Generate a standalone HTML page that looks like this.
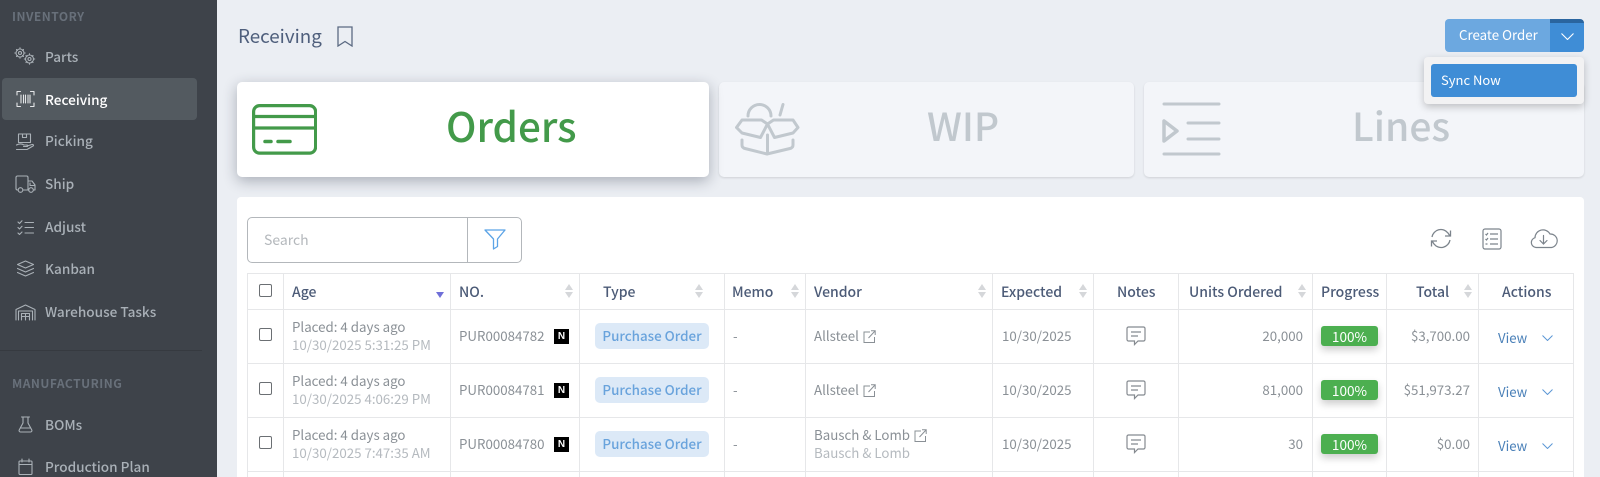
<!DOCTYPE html>
<html><head><meta charset="utf-8"><style>
html,body{margin:0;padding:0}
body{width:1600px;height:477px;overflow:hidden;background:#ebeef3;position:relative;font-family:"Noto Sans CJK JP","Liberation Sans",sans-serif;font-size:14px;color:#8a9096}
.a,.t,svg{position:absolute}
.t{white-space:nowrap;line-height:20px}
.side{left:0;top:0;width:217px;height:477px;background:#3e434a}
.n{left:45px;color:#a9b0b7;font-size:13.6px;font-weight:500;transform:translateY(-1px)}
.sec{left:12px;color:#68707a;font-size:12px;font-weight:700;letter-spacing:.5px}
.i{fill:none;stroke:#aab1b7;stroke-width:1.1;stroke-linecap:round;stroke-linejoin:round}
.card{top:82px;height:95px;border-radius:5px;background:#f3f5f9;box-shadow:0 1px 2px rgba(0,0,0,.12)}
.big{font-size:39px;line-height:50px;top:100px;font-weight:500;color:#c1c8ce}
.g{fill:none;stroke:#c1c8ce;stroke-width:3;stroke-linecap:round;stroke-linejoin:round}
.h{top:282px;color:#4c5b77;font-size:14px;font-weight:500}
.vl{top:273px;height:204px;width:1px;background:#e6e7e9}
.hl{left:247px;width:1327px;height:1px;background:#e6e7e9}
.s{font-size:13.3px;color:#8a9096}
.l{color:#b5babf}
.cb{left:259px;width:11px;height:11px;border:1.2px solid #6b6f73;border-radius:2px;background:#fff}
.nb{left:554px;width:15px;height:15px;background:#000;color:#fff;font:700 10px/15px "Liberation Sans",sans-serif;text-align:center}
.po{left:595px;width:114px;height:26px;border-radius:5px;background:#dce9f7;color:#69a3dc;font-size:13.4px;font-weight:500;line-height:25px;text-align:center}
.pr{left:1321px;width:57px;height:20px;border-radius:3px;background:#4caf50;color:#fff;font-size:13.6px;line-height:20px;text-align:center;box-shadow:0 4px 8px rgba(0,0,0,.2)}
.r{text-align:right}
.v{left:1498px;color:#4a80b8;font-size:13.2px;transform:translateY(1px)}
.up{width:0;height:0;border-left:4px solid transparent;border-right:4px solid transparent;border-bottom:6px solid #d5d7da}
.dn{width:0;height:0;border-left:4px solid transparent;border-right:4px solid transparent;border-top:6px solid #d5d7da}
</style></head><body>
<svg width="0" height="0" style="left:0;top:0"><defs>
<symbol id="note" viewBox="0 0 20 20"><path d="M2.500 1h15a1.500 1.500 0 0 1 1.500 1.500v11a1.500 1.500 0 0 1-1.500 1.500H12l-3.500 3.500V15H2.500A1.500 1.500 0 0 1 1 13.500v-11A1.500 1.500 0 0 1 2.500 1zM5 6h10M5 10h7" fill="none" stroke="#858a90" stroke-width="1.200"/></symbol>
<symbol id="ext" viewBox="0 0 13 13"><path d="M7 2H1v10.500h10.500V7M5.500 8 12 1M8 .8h4.200V5" fill="none" stroke="#8a9096" stroke-width="1"/></symbol>
<symbol id="chev" viewBox="0 0 11 6"><path d="M.5.500l5 5 5-5" fill="none" stroke="#5b96d5" stroke-width="1"/></symbol>
</defs></svg>

<div class="a side"></div>
<div class="t sec" style="top:7px">INVENTORY</div>
<div class="a" style="left:2px;top:78px;width:195px;height:42px;border-radius:4px;background:#535a60"></div>
<div class="t n" style="top:47px">Parts</div>
<div class="t n" style="top:90px;color:#fff">Receiving</div>
<div class="t n" style="top:131px">Picking</div>
<div class="t n" style="top:174px">Ship</div>
<div class="t n" style="top:217px">Adjust</div>
<div class="t n" style="top:259px">Kanban</div>
<div class="t n" style="top:302px">Warehouse Tasks</div>
<div class="a" style="left:0;top:350px;width:202px;height:1px;background:#363a40"></div>
<div class="t sec" style="top:374px">MANUFACTURING</div>
<div class="t n" style="top:415px">BOMs</div>
<div class="t n" style="top:457px">Production Plan</div>

<svg class="i" style="left:14px;top:47px" width="22" height="18" viewBox="0 0 22 18"><circle cx="6" cy="6" r="4"/><circle cx="6" cy="6" r="1.500"/><path d="M6 .8v1.200M6 10v1.200M.8 6H2M10 6h1.200M2.500 2.500l1 1M8.500 8.500l1 1M9.500 2.500l-1 1M3.500 8.500l-1 1"/><circle cx="15.500" cy="12" r="4"/><circle cx="15.500" cy="12" r="1.500"/><path d="M15.500 6.800V8M15.500 16v1.200M10.300 12h1.200M19.500 12h1.200M12 8.500l1 1M18 14.500l1 1M19 8.500l-1 1M13 14.500l-1 1"/></svg>
<svg class="i" style="left:16px;top:90px" width="19" height="18" viewBox="0 0 19 18"><path d="M1 5V1.500h3.500M14.500 1.500H18V5M18 13v3.500h-3.500M4.500 16.500H1V13M5 5v8M7.500 5v8M9.500 5v8M12 5v8M14 5v8" stroke="#e4e6e8"/></svg>
<svg class="i" style="left:15px;top:133px" width="20" height="19" viewBox="0 0 20 19"><path d="M3.500 1h12v8.500h-12zM7.500 1v3.500h4V1M1.500 12c3-1.500 5-1.500 7.500 0h3c1 0 1 1.500 0 1.500H8.500M12 13l5-1.500c1.500-.3 2 1 1 1.500l-6 3.500H1.500"/></svg>
<svg class="i" style="left:15px;top:175px" width="21" height="18" viewBox="0 0 21 18"><path d="M3 15H2.500A1.500 1.500 0 0 1 1 13.500V2.500A1.500 1.500 0 0 1 2.500 1h9A1.500 1.500 0 0 1 13 2.500V15H8M13 6h4l3 4v5h-1.500M13 15h1M15 8v2.500h5"/><circle cx="5.500" cy="15" r="2.300"/><circle cx="16" cy="15" r="2.300"/></svg>
<svg class="i" style="left:17px;top:220px" width="17" height="15" viewBox="0 0 17 15"><path d="M1 2l1.500 1.500L5 .8M1 7.500 2.500 9 5 6.300M1 13l1.500 1.500L5 12M8 2.500h8.500M8 7.500h8.500M8 13h8.500"/></svg>
<svg class="i" style="left:16px;top:260px" width="19" height="18" viewBox="0 0 19 18"><path d="M9.500 1 17.500 4.500 9.500 8 1.500 4.500zM1.500 8.500 9.500 12 17.500 8.500M1.500 12.500 9.500 16 17.500 12.500"/></svg>
<svg class="i" style="left:15px;top:304px" width="21" height="17" viewBox="0 0 21 17"><path d="M1 16V5.500L10.500 1 20 5.500V16M3.500 16V7h14v9M6.500 16V9.500h8V16M6.500 12.500h8M10.500 9.500V16"/></svg>
<svg class="i" style="left:18px;top:416px" width="15" height="17" viewBox="0 0 15 17"><path d="M3.500 1h8M5 1v6L1.200 14a1.400 1.400 0 0 0 1.300 2h10a1.400 1.400 0 0 0 1.300-2L10 7V1M3 12h9"/></svg>
<svg class="i" style="left:18px;top:458px" width="15" height="17" viewBox="0 0 15 17"><path d="M2 3h11a1 1 0 0 1 1 1v11.500a1 1 0 0 1-1 1H2a1 1 0 0 1-1-1V4a1 1 0 0 1 1-1zM1 6.500h13M4 1v3M11 1v3"/></svg>

<div class="t" style="left:238px;top:24px;font-size:18.800px;line-height:24px;color:#4f5f7c">Receiving</div>
<svg style="left:337px;top:26px" width="16" height="21" viewBox="0 0 16 21"><path d="M1 1h14v19l-7-4.500L1 20z" fill="none" stroke="#5b6a82" stroke-width="1.300"/></svg>

<div class="a card" style="left:719px;width:415px"></div>
<div class="a card" style="left:1144px;width:440px"></div>
<div class="a card" style="left:237px;width:472px;background:#fff;box-shadow:0 4px 14px rgba(30,40,60,.32)"></div>

<svg style="left:252px;top:104px" width="65" height="51" viewBox="0 0 65 51"><g fill="none" stroke="#439a4a" stroke-width="3.200" stroke-linecap="round"><rect x="1.600" y="1.600" width="62" height="47.500" rx="6"/><path d="M2 12.500h61M2 24h61"/><path d="M13 37.500h6M26 37.500h12" stroke-width="3.500"/></g></svg>
<div class="t big" style="left:446px;color:#439a4a;font-size:40.400px">Orders</div>

<svg class="g" style="left:735px;top:102px" width="65" height="54" viewBox="0 0 65 54"><path d="M13 14a11.500 11.500 0 0 1 23 0M48 2.500 45 13M32.500 22l-7 13.500L7 31 1.500 25.500 7 18h19.500zM32.500 22l7 13.500L58 31l5-5.500L58 18H38.500zM7 38v5c0 2 1 3 3 3.500L32 52l23-5.500c2-.5 3-1.500 3-3.500v-5M32.500 33v19"/></svg>
<div class="t big" style="left:927px">WIP</div>

<svg class="g" style="left:1162px;top:102px" width="60" height="54" viewBox="0 0 60 54"><path d="M2 2h55M26 21h31M26 37h31M2 52h55"/><path d="M2 19v20l13-10z" stroke-width="3.500"/></svg>
<div class="t big" style="left:1352px">Lines</div>

<div class="a" style="left:237px;top:197px;width:1347px;height:280px;background:#fff;border-radius:4px 4px 0 0"></div>

<!-- top right -->
<div class="a" style="left:1445px;top:19px;width:105px;height:33px;background:#6ca8e0;border-radius:4px 0 0 4px"></div>
<div class="a" style="left:1550px;top:19px;width:34px;height:33px;background:#3f8dd6;border-radius:0 4px 4px 0;box-sizing:border-box;border-top:4px solid #2a659f"></div>
<div class="t" style="left:1459px;top:25px;color:#fff;font-size:13.300px">Create Order</div>
<svg style="left:1561px;top:33px" width="13" height="7" viewBox="0 0 13 7"><path d="M.5.500l6 6 6-6" fill="none" stroke="#fff" stroke-width="1.100"/></svg>
<div class="a" style="left:1424px;top:57px;width:160px;height:47px;background:#f2f2f3;border-radius:4px;box-shadow:0 3px 8px rgba(0,0,0,.22)"></div>
<div class="a" style="left:1431px;top:64px;width:146px;height:33px;background:#3f8dd6;border-radius:3px"></div>
<div class="t" style="left:1441px;top:70px;color:#fff;font-size:13px">Sync Now</div>

<!-- search -->
<div class="a" style="left:247px;top:217px;width:273px;height:44px;border:1px solid #b3b7bb;border-radius:5px"></div>
<div class="a" style="left:467px;top:218px;width:1px;height:44px;background:#b3b7bb"></div>
<div class="t" style="left:264px;top:230px;color:#b4b8bc;font-size:14px">Search</div>
<svg style="left:484px;top:229px" width="22" height="21" viewBox="0 0 22 21"><path d="M1 1h20l-7.500 9v7.500L9.500 20V10z" fill="none" stroke="#5ba3e6" stroke-width="1.300" stroke-linejoin="round"/></svg>

<svg style="left:1430px;top:228px" width="22" height="21" viewBox="0 0 22 21"><path d="M2 9a9 9 0 0 1 16-4l2 3M20 12a9 9 0 0 1-16 4l-2-3M20.500 2.500V8H15M1.500 18.500V13H7" fill="none" stroke="#7c848c" stroke-width="1.300"/></svg>
<svg style="left:1482px;top:228px" width="20" height="22" viewBox="0 0 20 22"><g fill="none" stroke="#7c848c" stroke-width="1.200"><rect x="1" y="1" width="18" height="20" rx="2"/><path d="M3.500 6l1 1 1.500-2M3.500 11l1 1 1.500-2M3.500 16h2M8 6h8M8 11h8M8 16h8"/></g></svg>
<svg style="left:1530px;top:228px" width="28" height="21" viewBox="0 0 28 21"><g fill="none" stroke="#7c848c" stroke-width="1.200" stroke-linecap="round"><path d="M6 19.500a5 5 0 0 1-1-9.800A8 8 0 0 1 20 6a6.800 6.800 0 0 1 1.500 13.500z"/><path d="M13.500 7.500v8M10 12.500l3.500 3.500 3.500-3.500"/></g></svg>

<!-- table lines -->
<div class="a hl" style="top:273px"></div><div class="a hl" style="top:309px"></div><div class="a hl" style="top:363px"></div><div class="a hl" style="top:417px"></div><div class="a hl" style="top:471px"></div>
<div class="a vl" style="left:247px"></div><div class="a vl" style="left:283px"></div><div class="a vl" style="left:450px"></div><div class="a vl" style="left:579px"></div><div class="a vl" style="left:724px"></div><div class="a vl" style="left:805px"></div><div class="a vl" style="left:992px"></div><div class="a vl" style="left:1093px"></div><div class="a vl" style="left:1178px"></div><div class="a vl" style="left:1312px"></div><div class="a vl" style="left:1386px"></div><div class="a vl" style="left:1478px"></div><div class="a vl" style="left:1573px"></div>

<!-- header -->
<div class="a cb" style="top:284px"></div>
<div class="t h" style="left:292px">Age</div>
<div class="t h" style="left:459px">NO.</div>
<div class="t h" style="left:603px">Type</div>
<div class="t h" style="left:732px">Memo</div>
<div class="t h" style="left:814px">Vendor</div>
<div class="t h" style="left:1001px">Expected</div>
<div class="t h" style="left:1117px">Notes</div>
<div class="t h" style="left:1189px">Units Ordered</div>
<div class="t h" style="left:1321px">Progress</div>
<div class="t h" style="left:1416px">Total</div>
<div class="t h" style="left:1502px">Actions</div>
<div class="a dn" style="left:436px;top:292px;border-top-color:#6f6fd8"></div>
<div class="a up" style="left:565px;top:284px"></div><div class="a dn" style="left:565px;top:292px"></div>
<div class="a up" style="left:695px;top:284px"></div><div class="a dn" style="left:695px;top:292px"></div>
<div class="a up" style="left:791px;top:284px"></div><div class="a dn" style="left:791px;top:292px"></div>
<div class="a up" style="left:978px;top:284px"></div><div class="a dn" style="left:978px;top:292px"></div>
<div class="a up" style="left:1079px;top:284px"></div><div class="a dn" style="left:1079px;top:292px"></div>
<div class="a up" style="left:1298px;top:284px"></div><div class="a dn" style="left:1298px;top:292px"></div>
<div class="a up" style="left:1464px;top:284px"></div><div class="a dn" style="left:1464px;top:292px"></div>

<!-- row 1 -->
<div class="a cb" style="top:328px"></div>
<div class="t s" style="left:292px;top:317px">Placed: 4 days ago</div>
<div class="t s l" style="left:292px;top:335px">10/30/2025 5:31:25 PM</div>
<div class="t s" style="left:459px;top:326px">PUR00084782</div>
<div class="a nb" style="top:329px">N</div>
<div class="a po" style="top:323px">Purchase Order</div>
<div class="t s" style="left:733px;top:326px">-</div>
<div class="t s" style="left:814px;top:326px">Allsteel</div>
<svg style="left:863px;top:330px" width="13" height="13"><use href="#ext"/></svg>
<div class="t s" style="left:1002px;top:326px">10/30/2025</div>
<svg style="left:1126px;top:326px" width="20" height="20"><use href="#note"/></svg>
<div class="t s r" style="left:1203px;width:100px;top:326px">20,000</div>
<div class="a pr" style="top:326px">100%</div>
<div class="t s r" style="left:1370px;width:100px;top:326px">$3,700.00</div>
<div class="t v" style="top:327px">View</div>
<svg style="left:1542px;top:335px" width="11" height="6"><use href="#chev"/></svg>

<!-- row 2 -->
<div class="a cb" style="top:382px"></div>
<div class="t s" style="left:292px;top:371px">Placed: 4 days ago</div>
<div class="t s l" style="left:292px;top:389px">10/30/2025 4:06:29 PM</div>
<div class="t s" style="left:459px;top:380px">PUR00084781</div>
<div class="a nb" style="top:383px">N</div>
<div class="a po" style="top:377px">Purchase Order</div>
<div class="t s" style="left:733px;top:380px">-</div>
<div class="t s" style="left:814px;top:380px">Allsteel</div>
<svg style="left:863px;top:384px" width="13" height="13"><use href="#ext"/></svg>
<div class="t s" style="left:1002px;top:380px">10/30/2025</div>
<svg style="left:1126px;top:380px" width="20" height="20"><use href="#note"/></svg>
<div class="t s r" style="left:1203px;width:100px;top:380px">81,000</div>
<div class="a pr" style="top:380px">100%</div>
<div class="t s r" style="left:1370px;width:100px;top:380px">$51,973.27</div>
<div class="t v" style="top:381px">View</div>
<svg style="left:1542px;top:389px" width="11" height="6"><use href="#chev"/></svg>

<!-- row 3 -->
<div class="a cb" style="top:436px"></div>
<div class="t s" style="left:292px;top:425px">Placed: 4 days ago</div>
<div class="t s l" style="left:292px;top:443px">10/30/2025 7:47:35 AM</div>
<div class="t s" style="left:459px;top:434px">PUR00084780</div>
<div class="a nb" style="top:437px">N</div>
<div class="a po" style="top:431px">Purchase Order</div>
<div class="t s" style="left:733px;top:434px">-</div>
<div class="t s" style="left:814px;top:425px">Bausch &amp; Lomb</div>
<div class="t s l" style="left:814px;top:443px">Bausch &amp; Lomb</div>
<svg style="left:914px;top:429px" width="13" height="13"><use href="#ext"/></svg>
<div class="t s" style="left:1002px;top:434px">10/30/2025</div>
<svg style="left:1126px;top:434px" width="20" height="20"><use href="#note"/></svg>
<div class="t s r" style="left:1203px;width:100px;top:434px">30</div>
<div class="a pr" style="top:434px">100%</div>
<div class="t s r" style="left:1370px;width:100px;top:434px">$0.00</div>
<div class="t v" style="top:435px">View</div>
<svg style="left:1542px;top:443px" width="11" height="6"><use href="#chev"/></svg>
</body></html>
